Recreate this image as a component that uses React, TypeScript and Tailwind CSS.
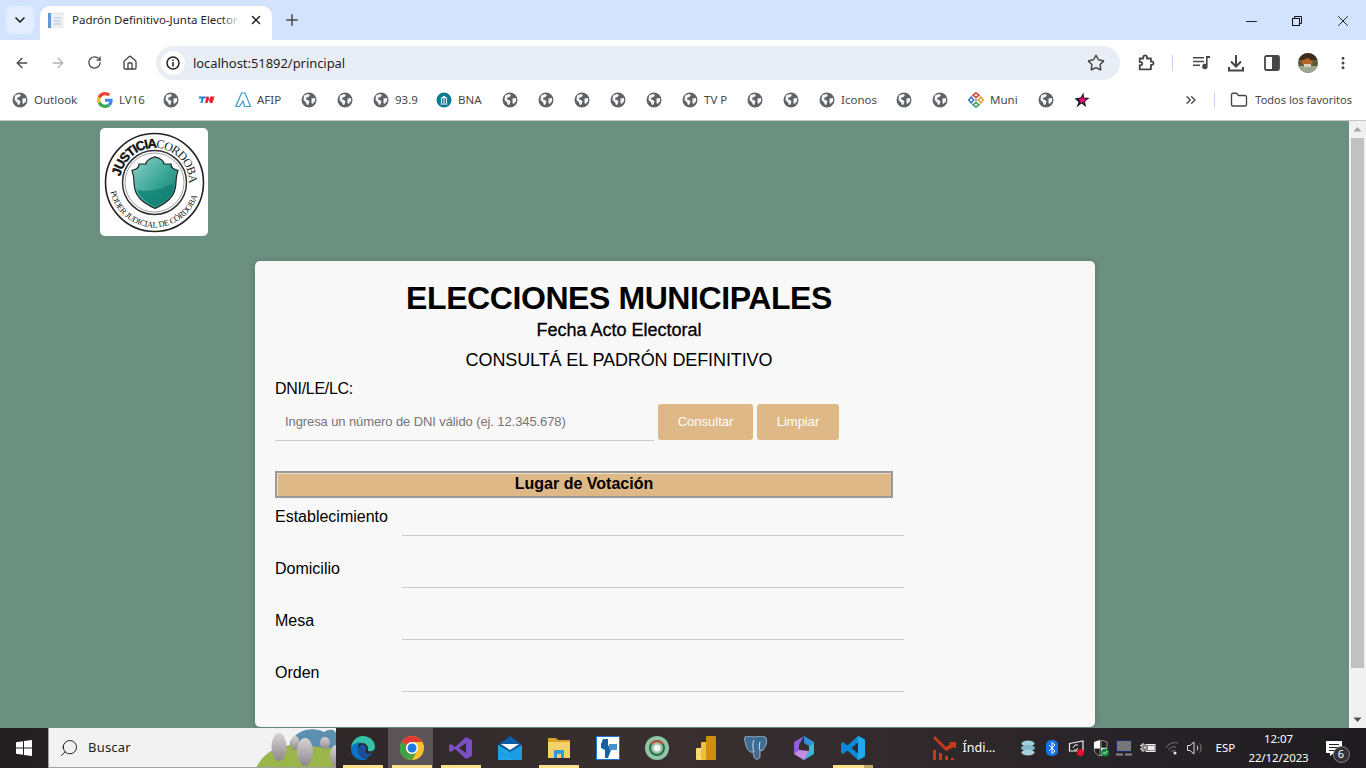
import type { ReactNode } from "react";
import { ChevronDown, X, Plus, ArrowLeft, ArrowRight, RotateCw, Home, Star, MoreVertical, Search, Folder, ChevronsRight, Minus } from "lucide-react";

// --- Small drawings ---

function Globe({ size = 16 }: { size?: number }) {
  return (
    <svg width={size} height={size} viewBox="0 0 16 16" className="shrink-0">
      <circle cx="8" cy="8" r="7.5" fill="#5f6368" />
      <path d="M3 3.5 L7 2 L9 3 L7.5 5 L5.5 5.5 L5 7.5 L7 8 L8.5 9.5 L7.5 12.5 L6 13 L5 10.5 L2.5 8 Z" fill="#fff" opacity="0.95" />
      <path d="M10.5 6.5 L14 6 L14.2 9 L11.5 12 L10.5 11 Z" fill="#fff" opacity="0.95" />
    </svg>
  );
}

function GoogleG() {
  return (
    <svg width="16" height="16" viewBox="0 0 48 48" className="shrink-0">
      <path fill="#EA4335" d="M24 9.5c3.5 0 6.7 1.2 9.2 3.6l6.9-6.9C35.9 2.4 30.5 0 24 0 14.6 0 6.5 5.4 2.6 13.2l8 6.2C12.5 13.7 17.8 9.5 24 9.5z" />
      <path fill="#4285F4" d="M46.9 24.5c0-1.6-.1-3.1-.4-4.5H24v9h12.9c-.6 3-2.2 5.5-4.7 7.2l7.7 6c4.5-4.2 7-10.3 7-17.7z" />
      <path fill="#FBBC05" d="M10.6 28.6c-.5-1.4-.8-3-.8-4.6s.3-3.2.8-4.6l-8-6.2C.9 16.5 0 20.1 0 24s.9 7.5 2.6 10.8l8-6.2z" />
      <path fill="#34A853" d="M24 48c6.5 0 11.9-2.1 15.9-5.8l-7.7-6c-2.2 1.4-4.9 2.3-8.2 2.3-6.2 0-11.5-4.2-13.4-9.9l-8 6.2C6.5 42.6 14.6 48 24 48z" />
    </svg>
  );
}

function TnLogo() {
  return (
    <svg width="16" height="16" viewBox="0 0 16 16" className="shrink-0">
      <path d="M0 4.5 H7 L6.5 6.5 H4.5 L3.5 11 H1.5 L2.5 6.5 H0 Z" fill="#1d7fe0" />
      <path d="M6 11 L7.5 4.5 H9.5 L10.5 8 L11.5 4.5 H15.5 L13.5 11 H11 L9.5 7.5 L8.5 11 Z" fill="#e5232b" />
    </svg>
  );
}

function AfipLogo() {
  return (
    <svg width="16" height="16" viewBox="0 0 16 16" fill="none" className="shrink-0">
      <path d="M6.5 1 H10 L15.5 14.5 H9.5 L8 9 L4.5 14.5 H0.8 Z" stroke="#3a9cc9" strokeWidth="1.2" />
    </svg>
  );
}

function BnaLogo() {
  return (
    <svg width="16" height="16" viewBox="0 0 16 16" className="shrink-0">
      <circle cx="8" cy="8" r="7.5" fill="#0a7a94" />
      <path d="M4 6.5 L8 3.8 L12 6.5 Z M4.5 11.5 H11.5 V12.5 H4.5 Z M5 7 H6 V11 H5 Z M7.5 7 H8.5 V11 H7.5 Z M10 7 H11 V11 H10 Z" fill="#fff" />
    </svg>
  );
}

function MuniLogo() {
  return (
    <svg width="16" height="16" viewBox="0 0 16 16" className="shrink-0" fill="none" strokeWidth="1.6">
      <path d="M8 0.8 L11 3.2 L8 5.6 L5 3.2 Z" stroke="#d9483b" />
      <path d="M0.8 8 L3.2 5 L5.6 8 L3.2 11 Z" stroke="#3d78c9" />
      <path d="M15.2 8 L12.8 5 L10.4 8 L12.8 11 Z" stroke="#e9a23b" />
      <path d="M8 15.2 L11 12.8 L8 10.4 L5 12.8 Z" stroke="#3fa35f" />
      <circle cx="8" cy="8" r="1.5" fill="#aaa" stroke="none" />
    </svg>
  );
}

function StarLogo() {
  return (
    <svg width="16" height="16" viewBox="0 0 16 16" className="shrink-0">
      <path d="M9.5 0.5 L10 5.5 L15.5 6 L11 9.5 L12 15 L7.5 11.5 L2.5 15.5 L4.5 10 L0.5 6.5 L6.5 5.5 Z" fill="#1b1b1b" />
      <path d="M9 4 L9.5 6.5 L13 7 L10 9 L10.5 12 L8 10 L5.5 11.5 L6.5 9 L4.5 7.2 L7.5 6.5 Z" fill="#ec0f7d" />
    </svg>
  );
}

function ExtensionIcon() {
  return (
    <svg width="18" height="18" viewBox="0 0 20 20" fill="none" stroke="#444746" strokeWidth="2" strokeLinejoin="round">
      <path d="M3 5 H7 V3.5 A1.8 1.8 0 0 1 11 3.5 V5 H15.5 V8.5 H17 A1.8 1.8 0 0 1 17 12 H15.5 V17 H3 V12.5 H4.5 A1.8 1.8 0 0 0 4.5 9 H3 Z" />
    </svg>
  );
}

function MediaIcon() {
  return (
    <svg width="18" height="16" viewBox="0 0 18 16" fill="#444746">
      <path d="M0 2 H11 V3.6 H0 Z M0 5.7 H11 V7.3 H0 Z M0 9.4 H7 V11 H0 Z" />
      <path d="M13 1 H17 V3 H14.6 V11.5 A2.7 2.7 0 1 1 13 9 Z" />
    </svg>
  );
}

function DownloadIcon() {
  return (
    <svg width="16" height="18" viewBox="0 0 16 18" fill="none" stroke="#444746" strokeWidth="2">
      <path d="M8 1 V11.5 M3 7.5 L8 12.5 L13 7.5 M1 13 V16.5 H15 V13" />
    </svg>
  );
}

function SidePanelIcon() {
  return (
    <svg width="16" height="16" viewBox="0 0 16 16">
      <rect x="1" y="1" width="14" height="14" rx="1.5" fill="#fff" stroke="#444746" strokeWidth="1.8" />
      <rect x="8" y="1" width="7" height="14" fill="#444746" />
    </svg>
  );
}

function Avatar() {
  return (
    <svg width="20" height="20" viewBox="0 0 20 20" className="shrink-0">
      <defs>
        <clipPath id="av">
          <circle cx="10" cy="10" r="10" />
        </clipPath>
      </defs>
      <g clipPath="url(#av)">
        <rect width="20" height="20" fill="#5d5a35" />
        <rect width="20" height="7" fill="#3e2d1c" />
        <path d="M3 8 L10 5 L15 9 L13 12 L5 12 Z" fill="#b5642c" />
        <rect y="13" width="20" height="7" fill="#9aa98e" />
        <rect x="6" y="11" width="7" height="3" fill="#d9d3c0" />
      </g>
    </svg>
  );
}

function RestoreIcon() {
  return (
    <svg width="10" height="10" viewBox="0 0 10 10" fill="none" stroke="#111" strokeWidth="1">
      <rect x="0.5" y="2.5" width="7" height="7" />
      <path d="M2.5 2.5 V0.5 H9.5 V7.5 H7.5" />
    </svg>
  );
}

function TabFavicon() {
  return (
    <svg width="16" height="16" viewBox="0 0 16 16" className="shrink-0">
      <rect x="0" y="1" width="15" height="15" fill="#eef1f4" stroke="#cfd6dc" strokeWidth="0.5" />
      <rect x="0" y="1" width="3" height="15" fill="#5d9bd2" />
      <path d="M6 6 H13 M6 9 H13 M6 12 H13" stroke="#b8c0c8" />
    </svg>
  );
}

function CourtLogo() {
  return (
    <svg width="108" height="108" viewBox="0 0 108 108">
      <defs>
        <path id="arcTop" d="M20.5 48.5 A34.5 34.5 0 0 1 88.9 51.5" fill="none" />
        <path id="arcBottom" d="M10.5 63.9 A45 45 0 0 0 97.5 67.7" fill="none" />
        <linearGradient id="shieldFill" x1="0" y1="0" x2="1" y2="1">
          <stop offset="0" stopColor="#8fd3c8" />
          <stop offset="0.55" stopColor="#35a494" />
          <stop offset="1" stopColor="#14776c" />
        </linearGradient>
      </defs>
      <circle cx="54.5" cy="54.5" r="49" fill="#fff" stroke="#222" strokeWidth="1.6" />
      <circle cx="54.5" cy="54.5" r="32" fill="#fff" stroke="#333" strokeWidth="1.5" />
      <circle cx="54.5" cy="54.5" r="29.5" fill="none" stroke="#777" strokeWidth="0.7" />
      <text fill="#111">
        <textPath href="#arcTop">
          <tspan fontFamily="Liberation Sans, sans-serif" fontSize="13" fontWeight="700" letterSpacing="-1.2" stroke="#111" strokeWidth="0.4">JUSTICIA</tspan>
          <tspan fontFamily="Liberation Serif, serif" fontSize="12" letterSpacing="-0.8" fill="#222">CORDOBA</tspan>
        </textPath>
      </text>
      <text fontFamily="Liberation Serif, serif" fontSize="8.5" fill="#222" letterSpacing="-0.3">
        <textPath href="#arcBottom">PODER JUDICIAL DE CÓRDOBA</textPath>
      </text>
      <g transform="translate(1 5) scale(1 0.91)">
        <path d="M54 83 C44 78 33 71 33 54 C33 47 32 44 31 41 C36 40 38 37 38 34 L45 34 C45 30 48 28 54 26 C60 28 63 30 63 34 L70 34 C70 37 72 40 77 41 C76 44 75 47 75 54 C75 71 64 78 54 83 Z" fill="url(#shieldFill)" stroke="#222" strokeWidth="1.2" />
        <path d="M36 62 C46 66 62 62 73 54 C72 70 63 76 54 80 C46 76 39 71 36 62 Z" fill="#0f7f73" opacity="0.75" />
      </g>
    </svg>
  );
}

// --- Taskbar icons ---

function EdgeIcon() {
  return (
    <svg width="24" height="24" viewBox="0 0 24 24">
      <path d="M12 0 C19 0 24 5 24 11 C24 15 20 16 17 15 C18 10 15 7 11 7 C6 7 1 10 0 13 C0 6 5 0 12 0 Z" fill="#35c1a8" />
      <path d="M0 13 C1 8 6 6 10 6 C7 8 6 11 7 15 C8 20 13 24 18 22 C15 24 13 24 11 24 C5 24 0 19 0 13 Z" fill="#0c72c7" />
      <path d="M7 14 C7 9 11 8 13 9 C16 10 16 14 14 15 C14 17 17 18 21 17 C19 21 15 23 12 21 C9 20 7 17 7 14 Z" fill="#1b4f9c" />
    </svg>
  );
}

function ChromeIcon() {
  return (
    <svg width="24" height="24" viewBox="0 0 24 24" className="relative">
      <circle cx="12" cy="12" r="12" fill="#fbc02d" />
      <path d="M12 0 A12 12 0 0 1 22.4 6 H12 A6 6 0 0 0 6.8 9 L1.6 6 A12 12 0 0 1 12 0 Z" fill="#e53935" />
      <path d="M1.6 6 L6.8 9 A6 6 0 0 0 12 18 L8 24 A12 12 0 0 1 1.6 6 Z" fill="#43a047" />
      <path d="M12 24 L17 15 A6 6 0 0 0 12 18 L8.5 23.5 Z" fill="#43a047" />
      <circle cx="12" cy="12" r="6" fill="#fff" />
      <circle cx="12" cy="12" r="4.5" fill="#1e78e6" />
    </svg>
  );
}

function VsIcon() {
  return (
    <svg width="24" height="24" viewBox="0 0 24 24">
      <path d="M17 1 L23 4 V20 L17 23 L6 13 L2 16 L0 15 V9 L2 8 L6 11 Z M17 7 L10 12 L17 17 Z" fill="#7a4fc0" />
    </svg>
  );
}

function MailIcon() {
  return (
    <svg width="24" height="24" viewBox="0 0 24 24">
      <path d="M0 9 L12 0 L24 9 L12 16 Z" fill="#0a5fa8" />
      <path d="M3 8 L21 8 L12 14 Z" fill="#fff" />
      <path d="M0 9 L12 16 L24 9 V24 H0 Z" fill="#21a6e8" />
      <path d="M24 9 V24 H16 L0 13 L0 24 Z" fill="#1892da" opacity="0.5" />
    </svg>
  );
}

function ExplorerIcon() {
  return (
    <svg width="22" height="20" viewBox="0 0 22 20">
      <path d="M0 0 H8 L10 2 H22 V20 H0 Z" fill="#d7a32a" />
      <rect y="4" width="22" height="16" fill="#f5d267" />
      <path d="M6 12 H16 V20 H13 V16 H9 V20 H6 Z" fill="#2f9ae0" />
    </svg>
  );
}

function AccessIcon() {
  return (
    <svg width="24" height="24" viewBox="0 0 24 24">
      <rect x="0.5" y="0.5" width="23" height="23" fill="#fff" stroke="#1a73d6" />
      <path d="M7 3 H12 V9 L15 14 L12 22 H9 V14 L5 12 V8 Z" fill="#1a5f9e" />
      <rect x="13" y="8" width="8" height="6" fill="#4a90c9" />
    </svg>
  );
}

function GreenDiscIcon() {
  return (
    <svg width="24" height="24" viewBox="0 0 24 24" fill="none">
      <circle cx="12" cy="12" r="12" fill="#8fc6a6" />
      <circle cx="12" cy="12" r="7" stroke="#2b6d46" strokeWidth="2" />
      <path d="M6 8 A8 8 0 0 1 18 8" stroke="#d9443b" strokeWidth="2" />
      <circle cx="12" cy="12" r="3.5" fill="#f2f2f2" />
    </svg>
  );
}

function PowerBiIcon() {
  return (
    <svg width="20" height="24" viewBox="0 0 20 24">
      <rect x="0" y="12" width="9" height="12" rx="1" fill="#f7dc6e" />
      <rect x="5" y="6" width="9" height="18" rx="1" fill="#efbf3a" />
      <rect x="10" y="0" width="10" height="24" rx="1" fill="#cf8d12" />
    </svg>
  );
}

function PostgresIcon() {
  return (
    <svg width="24" height="24" viewBox="0 0 24 24">
      <path d="M2 1 C6 -1 9 1 12 1 C16 0 21 -1 23 2 C25 6 22 11 20 14 C19 15 18 15 17 14 L17 21 C16 24 12 24 11 21 L10 16 C7 17 4 14 3 9 C2 6 1 3 2 1 Z" fill="#3d6d96" stroke="#b9c7d2" strokeWidth="0.8" />
      <path d="M11 4 C9 9 10 13 11 16 M17 6 C16 9 16 12 17 14" stroke="#dbe5ec" strokeWidth="1" fill="none" />
    </svg>
  );
}

function CopilotIcon() {
  return (
    <svg width="22" height="24" viewBox="0 0 22 24">
      <path d="M11 0 L21 6 L16 10 L11 7 Z" fill="#2f8fd8" />
      <path d="M11 0 L1 6 V18 L6 21 V9 Z" fill="#8f5dd6" />
      <path d="M21 6 V18 L11 24 L6 21 L16 15 V10 Z" fill="#38b5d9" />
      <path d="M1 18 L6 14 L16 15 L11 24 Z" fill="#c78be3" />
    </svg>
  );
}

function VscodeIcon() {
  return (
    <svg width="24" height="24" viewBox="0 0 24 24">
      <path d="M17 0 L24 3.5 V20.5 L17 24 L6.5 14.5 L2 18 L0 16.5 V7.5 L2 6 L6.5 9.5 Z M17 6.5 L10.5 12 L17 17.5 Z" fill="#0a8bd8" />
      <path d="M17 0 L24 3.5 V20.5 L17 24 Z" fill="#23a8ee" />
    </svg>
  );
}

function StocksIcon() {
  return (
    <svg width="24" height="24" viewBox="0 0 24 24" fill="#c8391c" className="shrink-0">
      <rect x="1" y="14" width="3" height="10" />
      <rect x="7" y="17" width="3" height="7" />
      <rect x="13" y="20" width="3" height="4" />
      <rect x="19" y="22" width="3" height="2" />
      <path d="M1 2 L3 0 L14 11 L18 8 L17 6 H24 V13 L22 11 L14 15 Z" />
    </svg>
  );
}

function SearchArt() {
  return (
    <svg width="84" height="40" viewBox="0 0 84 40" className="absolute right-0 top-0">
      <defs>
        <linearGradient id="rock" x1="0" y1="0" x2="0" y2="1">
          <stop offset="0" stopColor="#d8d4d6" />
          <stop offset="1" stopColor="#8f898c" />
        </linearGradient>
      </defs>
      <path d="M38 14 C45 2 60 -2 72 4 C78 0 84 2 84 6 V22 H38 Z" fill="#5c8fb0" />
      <path d="M4 40 C10 28 20 20 32 18 C50 14 70 22 84 20 V40 Z" fill="#9ab64a" />
      <ellipse cx="27" cy="19" rx="7.5" ry="14" fill="url(#rock)" />
      <ellipse cx="43" cy="15" rx="4.5" ry="7" fill="url(#rock)" />
      <ellipse cx="53" cy="24" rx="8" ry="14" fill="url(#rock)" />
      <ellipse cx="73" cy="15" rx="5" ry="6" fill="url(#rock)" />
      <ellipse cx="84" cy="28" rx="6" ry="11" fill="url(#rock)" />
    </svg>
  );
}

function TrayIcons() {
  return (
    <div className="flex items-center">
      <svg width="16" height="16" viewBox="0 0 16 16" className="ml-[23px]">
        <ellipse cx="8" cy="3.5" rx="6.5" ry="3" fill="#9fd0e0" />
        <ellipse cx="8" cy="8" rx="7" ry="3" fill="#7fb6cc" />
        <ellipse cx="8" cy="12.5" rx="6.5" ry="3" fill="#a9cfdc" />
      </svg>
      <svg width="12" height="16" viewBox="0 0 12 16" className="ml-[10px]">
        <rect width="12" height="16" rx="5" fill="#1672e8" />
        <path d="M3 5 L9 11 L6 13.5 V2.5 L9 5 L3 11" fill="none" stroke="#fff" strokeWidth="1" />
      </svg>
      <svg width="16" height="16" viewBox="0 0 16 16" className="ml-[10px]" fill="none">
        <path d="M1.5 3.5 L15 1 V11 H1.5 Z" stroke="#eee" strokeWidth="1.2" />
        <path d="M5 8 L7 5 H10 M10 8 L8 10 H6" stroke="#eee" />
        <circle cx="12.5" cy="12.5" r="3.5" fill="#e8112d" />
      </svg>
      <svg width="16" height="17" viewBox="0 0 16 17" className="ml-[9px]">
        <path d="M1 2 L7 0 V8 H1 Z M8 8 H14 C14 12 11 15 8 16 Z" fill="#fff" />
        <path d="M8 0 L14 2 V8 H8 Z M1 8.5 H7 V16 C4 15 1 12 1 8.5 Z" fill="#222" stroke="#fff" strokeWidth="0.5" />
        <circle cx="12" cy="12.5" r="4" fill="#10893e" />
        <path d="M10 12.5 L11.5 14 L14 11" stroke="#fff" fill="none" />
      </svg>
      <svg width="16" height="16" viewBox="0 0 16 16" className="ml-[7px]">
        <rect x="0.5" y="0.5" width="15" height="11" fill="#777" stroke="#1b2a6b" />
        <rect x="0" y="13.5" width="7" height="2" fill="#8a8a8a" />
        <rect x="9" y="13.5" width="7" height="2" fill="#8a8a8a" />
      </svg>
      <svg width="16" height="10" viewBox="0 0 16 10" className="ml-[8px]" fill="none" stroke="#eee">
        <path d="M0 2.5 H2 M0 6 H2 M2 1 H4 V8 H2 Z M4 4.5 H6" />
        <rect x="6" y="1.5" width="9" height="7" />
        <rect x="8" y="3" width="6" height="4" fill="#eee" />
      </svg>
      <svg width="16" height="14" viewBox="0 0 16 14" className="ml-[9px]" fill="none" stroke="#777">
        <path d="M1 7 A10 10 0 0 1 13 2 M3.5 9 A7 7 0 0 1 11 6 M6 11 A4 4 0 0 1 10 9.5" />
        <circle cx="10" cy="12" r="1.5" fill="#eee" stroke="none" />
      </svg>
      <svg width="16" height="14" viewBox="0 0 16 14" className="ml-[6px]" fill="none" stroke="#ddd">
        <path d="M0.5 4.5 H3 L7 1 V13 L3 9.5 H0.5 Z M10 4.5 C11 6 11 8 10 9.5" />
        <path d="M12.5 2.5 C14.5 5 14.5 9 12.5 11.5" stroke="#888" />
      </svg>
    </div>
  );
}

// --- Browser chrome data ---

type Bookmark = { label?: string; width?: string; icon?: ReactNode };

const BOOKMARKS: Bookmark[] = [
  { label: "Outlook", width: "w-[43px]" },
  { label: "LV16", width: "w-[24px]", icon: <GoogleG /> },
  {},
  { icon: <TnLogo /> },
  { label: "AFIP", width: "w-[24px]", icon: <AfipLogo /> },
  {},
  {},
  { label: "93.9", width: "w-[21px]" },
  { label: "BNA", width: "w-[24px]", icon: <BnaLogo /> },
  {},
  {},
  {},
  {},
  {},
  { label: "TV P", width: "w-[23px]" },
  {},
  {},
  { label: "Iconos", width: "w-[35px]" },
  {},
  {},
  { label: "Muni", width: "w-[28px]", icon: <MuniLogo /> },
  {},
  { icon: <StarLogo /> },
];

const TASK_ICONS: { icon: ReactNode; open?: boolean; active?: boolean; stacked?: boolean }[] = [
  { icon: <EdgeIcon />, open: true },
  { icon: <ChromeIcon />, open: true, active: true },
  { icon: <VsIcon />, open: true },
  { icon: <MailIcon /> },
  { icon: <ExplorerIcon />, open: true },
  { icon: <AccessIcon /> },
  { icon: <GreenDiscIcon /> },
  { icon: <PowerBiIcon /> },
  { icon: <PostgresIcon /> },
  { icon: <CopilotIcon /> },
  { icon: <VscodeIcon />, open: true, stacked: true },
];

const RESULT_FIELDS = ["Establecimiento", "Domicilio", "Mesa", "Orden"];

// --- Sections ---

function TabStrip() {
  return (
    <div className="flex h-[40px] items-end bg-[#d3e3fd] text-[#1f1f1f]">
      <div className="mb-[6px] ml-[6px] flex h-[28px] w-[28px] items-center justify-center rounded-lg bg-[#e3edfd]">
        <ChevronDown size={16} strokeWidth={2.5} />
      </div>
      <div className="ml-[6px] flex h-[34px] w-[232px] items-center rounded-t-[10px] bg-white pb-[6px] pl-[8px] pr-[9px]">
        <TabFavicon />
        <div className="relative ml-[8px] w-[168px] overflow-hidden whitespace-nowrap text-[11.5px]">
          Padrón Definitivo-Junta Electoral
          <div className="absolute inset-y-0 right-0 w-[18px] bg-gradient-to-r from-transparent to-white" />
        </div>
        <X size={14} strokeWidth={2.5} className="ml-auto" />
      </div>
      <Plus size={18} strokeWidth={2} className="mb-[11px] ml-[11px] text-[#444746]" />
      <div className="mb-[10px] ml-auto flex items-center">
        <div className="flex w-[46px] justify-center"><Minus size={17} strokeWidth={1.4} /></div>
        <div className="flex w-[46px] justify-center"><RestoreIcon /></div>
        <div className="flex w-[46px] justify-center"><X size={18} strokeWidth={1.3} /></div>
      </div>
    </div>
  );
}

function Toolbar() {
  return (
    <div className="flex h-[45px] items-center rounded-t-[10px] bg-white pl-[14px] text-[#444746]">
      <ArrowLeft size={16} strokeWidth={2} />
      <ArrowRight size={16} strokeWidth={2} className="ml-[20px] text-[#b0b3b5]" />
      <RotateCw size={15} strokeWidth={2} className="ml-[21px]" />
      <Home size={16} strokeWidth={2} className="ml-[20px]" />
      <div className="ml-[18px] flex h-[34px] w-[964px] items-center rounded-full bg-[#e9eef6] pl-[5px] pr-[15px]">
        <div className="flex h-[24px] w-[24px] items-center justify-center rounded-full bg-white">
          <svg width="14" height="14" viewBox="0 0 14 14" fill="none" stroke="#1f1f1f" strokeWidth="1.5">
            <circle cx="7" cy="7" r="6" />
            <path d="M7 6 V10.5 M7 3.5 V5" />
          </svg>
        </div>
        <span className="ml-[8px] pt-[2px] text-[13px] tracking-[-0.05px] text-[#1f1f1f]">localhost:51892/principal</span>
        <Star size={18} strokeWidth={2} className="ml-auto" />
      </div>
      <div className="ml-[17px]"><ExtensionIcon /></div>
      <div className="ml-[17px] h-[16px] w-px bg-[#c2d5f2]" />
      <div className="ml-[20px]"><MediaIcon /></div>
      <div className="ml-[17px]"><DownloadIcon /></div>
      <div className="ml-[20px]"><SidePanelIcon /></div>
      <div className="ml-[18px]"><Avatar /></div>
      <MoreVertical size={16} strokeWidth={2.5} className="ml-[17px]" />
    </div>
  );
}

function BookmarksBar() {
  return (
    <div className="flex h-[36px] items-center border-b border-[#c7c7c7] bg-white pb-[5px] pl-[2px] text-[11.5px] text-[#474747]">
      {BOOKMARKS.map((b, i) => (
        <div key={i} className="flex items-center gap-[6px] whitespace-nowrap px-[10px]">
          {b.icon ?? <Globe />}
          {b.label && <span className={b.width}>{b.label}</span>}
        </div>
      ))}
      <div className="ml-auto flex items-center pr-[14px]">
        <ChevronsRight size={16} strokeWidth={2} />
        <div className="ml-[15px] h-[16px] w-px bg-[#c2d5f2]" />
        <Folder size={18} strokeWidth={1.8} className="ml-[15px] text-[#444746]" />
        <span className="ml-[7px] whitespace-nowrap text-[11px]">Todos los favoritos</span>
      </div>
    </div>
  );
}

function PadronCard() {
  return (
    <div className="ml-[255px] mt-[25px] h-[466px] w-[840px] rounded-[5px] bg-[#f8f8f8] px-[20px] pt-[19px] text-black shadow-[0_0_6px_rgba(0,0,0,0.18)]">
      <div className="w-[688px] text-center">
        <h1 className="text-[32px] font-bold leading-[36px] tracking-[-0.42px]">ELECCIONES MUNICIPALES</h1>
        <h2 className="mt-[2px] text-[18px] leading-[24px] [-webkit-text-stroke:0.3px_black]">Fecha Acto Electoral</h2>
        <h3 className="mt-[6px] text-[18px] leading-[24px] tracking-[-0.1px]">CONSULTÁ EL PADRÓN DEFINITIVO</h3>
      </div>
      <label className="mt-[5px] block text-[16px] leading-[24px] tracking-[-0.3px]">DNI/LE/LC:</label>
      <div className="mt-[2px] flex items-end">
        <input
          readOnly
          placeholder="Ingresa un número de DNI válido (ej. 12.345.678)"
          className="-mb-[1px] h-[38px] w-[379px] border-b border-[#cccccc] bg-transparent px-[10px] text-[13px] tracking-[-0.1px] outline-none placeholder:text-[#757575]"
        />
        <button className="ml-[4px] h-[36px] w-[95px] rounded-[3px] bg-[#deb887] text-[13px] text-white">Consultar</button>
        <button className="ml-[4px] h-[36px] w-[82px] rounded-[3px] bg-[#deb887] text-[13px] text-white">Limpiar</button>
      </div>
      <div className="mt-[31px] flex h-[27px] w-[618px] items-center justify-center border-[2px] border-[#999999] bg-[#deb887] pb-[2px] text-[16px] font-bold shadow-[inset_1px_1px_0_#efe0c8]">
        Lugar de Votación
      </div>
      <div className="mt-[5px]">
        {RESULT_FIELDS.map((f) => (
          <div key={f} className="flex h-[52px] w-[629px]">
            <span className="h-[24px] w-[127px] pt-[2px] text-[16px] leading-[24px]">{f}</span>
            <div className="h-[33px] flex-1 border-b border-[#cccccc]" />
          </div>
        ))}
      </div>
    </div>
  );
}

function Scrollbar() {
  return (
    <div className="flex w-[17px] shrink-0 flex-col items-center bg-[#f1f1f1]">
      <svg width="9" height="17" viewBox="0 0 9 17" fill="#a3a3a3"><path d="M4.5 6 L8.5 10.5 H0.5 Z" /></svg>
      <div className="h-[530px] w-[13px] bg-[#c1c1c1]" />
      <svg width="9" height="17" viewBox="0 0 9 17" className="mt-auto" fill="#505050"><path d="M4.5 11 L8.5 6.5 H0.5 Z" /></svg>
    </div>
  );
}

function Taskbar() {
  return (
    <div className="flex h-[40px] items-center bg-[#2a2324] bg-gradient-to-r from-[#231f20] via-[#3a3032] to-[#1e1c20] text-white">
      <div className="flex h-full w-[48px] items-center justify-center">
        <svg width="16" height="16" viewBox="0 0 16 16" fill="#fff">
          <path d="M0 2.2 L7 1.2 V7.5 H0 Z M8 1 L16 0 V7.5 H8 Z M0 8.5 H7 V14.8 L0 13.8 Z M8 8.5 H16 V16 L8 15 Z" />
        </svg>
      </div>
      <div className="relative flex h-full w-[288px] items-center overflow-hidden border-b border-l border-[#a0a0a0] bg-[#f2f2f2] pl-[10px] text-[#222]">
        <Search size={20} strokeWidth={1.2} className="-scale-x-100" />
        <span className="ml-[9px] pt-[1px] text-[13px] tracking-[0.2px]">Buscar</span>
        <SearchArt />
      </div>
      <div className="ml-[2.5px] flex h-full">
        {TASK_ICONS.map((t, i) => (
          <div key={i} className="relative flex h-full w-[49px] items-center justify-center">
            {t.active && <div className="absolute inset-y-0 left-0 right-[4px] bg-[#5a5456]" />}
            {t.icon}
            {t.open && <div className="absolute bottom-0 left-[4px] right-[5px] h-[3px] bg-[#fce08a]" />}
            {t.stacked && <div className="absolute bottom-0 right-[5px] h-[3px] w-[9px] bg-[#bfa868]" />}
          </div>
        ))}
      </div>
      <div className="ml-[54px] flex items-center">
        <StocksIcon />
        <span className="ml-[7px] w-[34px] whitespace-nowrap text-[12.5px]">Índi...</span>
      </div>
      <TrayIcons />
      <span className="ml-[13px] w-[19px] whitespace-nowrap text-[11.5px]">ESP</span>
      <div className="ml-[9px] flex w-[70px] flex-col items-center text-[11.5px] leading-[19px] tracking-[-0.1px]">
        <span>12:07</span>
        <span>22/12/2023</span>
      </div>
      <div className="relative ml-[12px]">
        <svg width="16" height="15" viewBox="0 0 16 15" fill="#fff">
          <path d="M0 0 H16 V12 H8 L4 15 V12 H0 Z" />
          <path d="M3 3.5 H13 M3 6.5 H13 M3 9.5 H10" stroke="#222" />
        </svg>
        <div className="absolute left-[7px] top-[5px] flex h-[17px] w-[17px] items-center justify-center rounded-full border border-[#888] bg-[#333] text-[11px]">6</div>
      </div>
    </div>
  );
}

export default function App() {
  return (
    <div className="flex h-[768px] w-[1366px] flex-col overflow-hidden bg-white font-['Noto_Sans',sans-serif]">
      <TabStrip />
      <Toolbar />
      <BookmarksBar />
      <div className="flex min-h-0 flex-1 bg-[#6b9080] font-['Liberation_Sans',Arial,sans-serif]">
        <div className="flex-1">
          <div className="ml-[100px] mt-[7px] h-[108px] w-[108px] overflow-hidden rounded-[5px] bg-white">
            <CourtLogo />
          </div>
          <PadronCard />
        </div>
        <Scrollbar />
      </div>
      <Taskbar />
    </div>
  );
}
